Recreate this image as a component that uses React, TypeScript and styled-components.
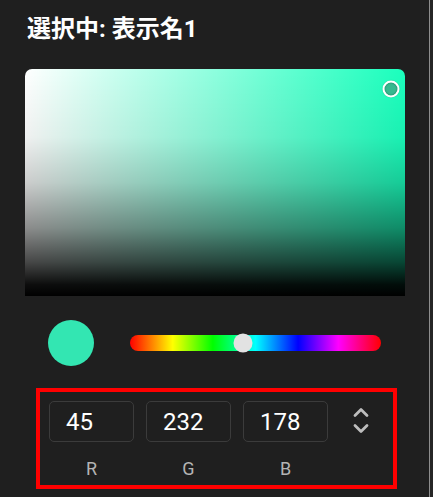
import React from "react";
import styled, { createGlobalStyle } from "styled-components";

const Global = createGlobalStyle`
  html, body { margin: 0; padding: 0; background: #262626; }
  body { font-family: Roboto, "Noto Sans CJK JP", sans-serif; }
`;

const Panel = styled.div`
  box-sizing: border-box;
  width: 430px;
  height: 497px;
  background: #1f1f1f;
  border-right: 1px solid #8d8d8d;
  padding: 12px 24px 0 25px;
  display: flex;
  flex-direction: column;
`;

const Title = styled.h1`
  margin: 0;
  color: #ffffff;
  font-family: Roboto, "Noto Sans CJK JP", sans-serif;
  font-weight: 700;
  font-size: 24px;
  line-height: 34px;
  padding-left: 2px;
`;

const Saturation = styled.div<{ $hue: number }>`
  position: relative;
  margin-top: 23px;
  width: 380px;
  height: 227px;
  border-radius: 7px 7px 0 0;
  background:
    linear-gradient(
      to bottom,
      rgba(0, 0, 0, 0) 0%,
      rgba(0, 0, 0, 0.06) 30%,
      rgba(0, 0, 0, 0.2) 50%,
      rgba(0, 0, 0, 0.45) 70%,
      rgba(0, 0, 0, 0.72) 85%,
      rgba(0, 0, 0, 0.95) 95%,
      #000 100%
    ),
    linear-gradient(to right, #fff 0%, rgba(255, 255, 255, 0) 100%),
    hsl(${(p) => p.$hue}, 100%, 55%);
`;

const Pointer = styled.div<{ $color: string }>`
  position: absolute;
  width: 13px;
  height: 13px;
  border: 2px solid #ffffff;
  border-radius: 50%;
  background: ${(p) => p.$color};
  box-shadow: inset 0 0 2px rgba(0, 0, 0, 0.45), 0 0 1px rgba(0, 0, 0, 0.3);
  transform: translate(-50%, -50%);
`;

const ControlsRow = styled.div`
  display: flex;
  align-items: center;
  margin-top: 24px;
  padding-left: 23px;
  gap: 36px;
`;

const Swatch = styled.div<{ $color: string }>`
  width: 46px;
  height: 46px;
  border-radius: 50%;
  background: ${(p) => p.$color};
  flex: none;
`;

const HueBar = styled.div`
  position: relative;
  width: 251px;
  height: 16px;
  border-radius: 8px;
  background: linear-gradient(
    to right,
    #ff0000 0%,
    #ffff00 17%,
    #00ff00 33%,
    #00ffff 50%,
    #0000ff 67%,
    #ff00ff 83%,
    #ff0000 100%
  );
`;

const HueThumb = styled.div`
  position: absolute;
  top: 50%;
  width: 19px;
  height: 19px;
  border-radius: 50%;
  background: #e2e2e2;
  transform: translate(-50%, -50%);
`;

const RgbGroup = styled.div`
  box-sizing: border-box;
  margin: 22px 0 0 11px;
  width: 361px;
  height: 101px;
  border: 4px solid #ff0000;
  padding: 9px 0 0 9px;
  display: flex;
  align-items: flex-start;
  gap: 12px;
`;

const Field = styled.div`
  display: flex;
  flex-direction: column;
  align-items: center;
`;

const ValueBox = styled.div`
  box-sizing: border-box;
  width: 85px;
  height: 41px;
  border: 1px solid #3b3b3b;
  border-radius: 5px;
  padding-left: 16px;
  display: flex;
  align-items: center;
  color: #ffffff;
  font-family: Roboto, sans-serif;
  font-size: 24px;
`;

const Label = styled.span`
  margin-top: 16px;
  color: #b4b4b4;
  font-family: Roboto, sans-serif;
  font-size: 18px;
  line-height: 22px;
`;

const Toggle = styled.div`
  margin: 6px 0 0 13px;
  display: flex;
  flex-direction: column;
  align-items: center;
  gap: 5px;
`;

const Chevron = styled.svg`
  display: block;
`;

export default function App() {
  const rgb = [45, 232, 178];
  const hue = 162.7;
  const labels = ["R", "G", "B"];
  return (
    <>
      <Global />
      <Panel>
        <Title>選択中: 表示名1</Title>
        <Saturation $hue={hue}>
          <Pointer $color="#35b98f" style={{ left: "96.3%", top: "8.8%" }} />
        </Saturation>
        <ControlsRow>
          <Swatch $color="#33e6b2" />
          <HueBar>
            <HueThumb style={{ left: `${(hue / 360) * 100}%` }} />
          </HueBar>
        </ControlsRow>
        <RgbGroup>
          {rgb.map((v, i) => (
            <Field key={labels[i]}>
              <ValueBox>{v}</ValueBox>
              <Label>{labels[i]}</Label>
            </Field>
          ))}
          <Toggle>
            <Chevron width="16" height="11" viewBox="0 0 16 11">
              <path d="M2 8.5 L8 2.5 L14 8.5" fill="none" stroke="#bdbdbd" strokeWidth="2.8" strokeLinecap="round" strokeLinejoin="round" />
            </Chevron>
            <Chevron width="16" height="11" viewBox="0 0 16 11">
              <path d="M2 2.5 L8 8.5 L14 2.5" fill="none" stroke="#bdbdbd" strokeWidth="2.8" strokeLinecap="round" strokeLinejoin="round" />
            </Chevron>
          </Toggle>
        </RgbGroup>
      </Panel>
    </>
  );
}
